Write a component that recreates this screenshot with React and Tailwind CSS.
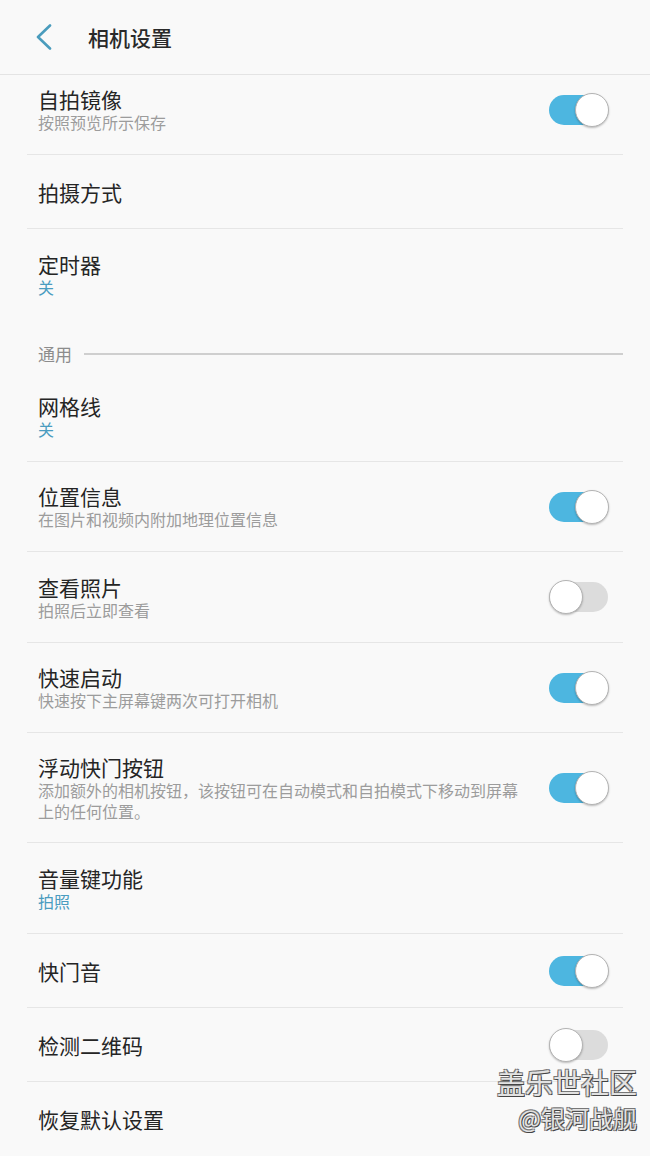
import { useState } from 'react';

const rowsTop = [
  { id: 'mirror', title: '自拍镜像', sub: '按照预览所示保存', toggle: true, on: true, h: 'h-[80px] pb-[10px]' },
  { id: 'mode', title: '拍摄方式', h: 'h-[74px]' },
  { id: 'timer', title: '定时器', value: '关', h: 'h-[90px]', noBorder: true },
];

const rowsGeneral = [
  { id: 'grid', title: '网格线', value: '关', h: 'h-[90px]' },
  { id: 'location', title: '位置信息', sub: '在图片和视频内附加地理位置信息', toggle: true, on: true, h: 'h-[90px]' },
  { id: 'review', title: '查看照片', sub: '拍照后立即查看', toggle: true, on: false, h: 'h-[91px]' },
  { id: 'quick', title: '快速启动', sub: '快速按下主屏幕键两次可打开相机', toggle: true, on: true, h: 'h-[90px]' },
  {
    id: 'float',
    title: '浮动快门按钮',
    sub: '添加额外的相机按钮，该按钮可在自动模式和自拍模式下移动到屏幕上的任何位置。',
    toggle: true,
    on: true,
    h: 'h-[110px]',
  },
  { id: 'volume', title: '音量键功能', value: '拍照', h: 'h-[91px]' },
  { id: 'sound', title: '快门音', toggle: true, on: true, h: 'h-[74px]' },
  { id: 'qr', title: '检测二维码', toggle: true, on: false, h: 'h-[74px]' },
  { id: 'reset', title: '恢复默认设置', h: 'h-[74px]', noBorder: true },
];

const Toggle = ({ on, onClick }) => (
  <button
    onClick={onClick}
    className={`relative w-[59px] h-[30px] rounded-full shrink-0 ${on ? 'bg-[#4db6e0]' : 'bg-[#dcdcdc]'}`}
  >
    <span
      className={`absolute top-[-2px] w-[34px] h-[34px] rounded-full bg-white border border-[#b4b4b4] shadow-[0_1px_2px_rgba(0,0,0,0.25)] ${
        on ? 'right-[-1px]' : 'left-0'
      }`}
    ></span>
  </button>
);

const Row = ({ row, on, onToggle }) => (
  <div
    className={`${row.h} flex items-center justify-between pl-[11px] pr-[15px] ${
      row.noBorder ? '' : 'border-b border-[#e6e6e6]'
    }`}
  >
    <div className="flex flex-col pr-[20px]">
      <span className="text-[21px] leading-[26px] text-[#252525]">{row.title}</span>
      {row.sub && (
        <span className="text-[16px] leading-[21px] text-[#9c9c9c] max-w-[490px]">{row.sub}</span>
      )}
      {row.value && <span className="text-[16px] leading-[21px] text-[#4a9cc0]">{row.value}</span>}
    </div>
    {row.toggle && <Toggle on={on} onClick={onToggle} />}
  </div>
);

const App = () => {
  const [state, setState] = useState(() => {
    const s = {};
    [...rowsTop, ...rowsGeneral].forEach(r => {
      if (r.toggle) s[r.id] = r.on;
    });
    return s;
  });

  const flip = id => setState({ ...state, [id]: !state[id] });

  return (
    <div className="relative w-full h-[1156px] overflow-hidden bg-[#f9f9f9] font-['Noto_Sans_CJK_SC','Noto_Sans',sans-serif]">
      {/* Header */}
      <div className="h-[75px] flex items-center border-b border-[#e4e4e4]">
        <div className="pl-[35px] w-[88px]">
          <svg width="18" height="26" viewBox="0 0 18 26" fill="none">
            <path d="M15 1.5 L3 13 L15 24.5" stroke="#4a9cbd" strokeWidth="2.6" strokeLinecap="round" strokeLinejoin="round" />
          </svg>
        </div>
        <h1 className="text-[21px] font-medium text-[#2a2a2a] leading-none">相机设置</h1>
      </div>

      <div className="mx-[27px]">
        {rowsTop.map(row => (
          <Row key={row.id} row={row} on={state[row.id]} onToggle={() => flip(row.id)} />
        ))}

        {/* Section header */}
        <div className="h-[53px] flex items-end pb-[7px] pl-[11px]">
          <span className="text-[17px] leading-[23px] text-[#8c8c8c]">通用</span>
          <div className="flex-1 h-[2px] bg-[#cfcfcf] ml-[12px] mb-[10px]"></div>
        </div>

        {rowsGeneral.map(row => (
          <Row key={row.id} row={row} on={state[row.id]} onToggle={() => flip(row.id)} />
        ))}
      </div>

      {/* Watermark */}
      <div className="absolute right-[13px] top-[1064px] flex flex-col items-end pointer-events-none">
        <span className="text-[28px] leading-[36px] text-[#e2e2e2] [text-shadow:1px_1px_0_#444,-1px_-1px_0_#777,1px_-1px_0_#777,-1px_1px_0_#777]">
          盖乐世社区
        </span>
        <span className="text-[24px] leading-[32px] text-[#e2e2e2] mt-[2px] [text-shadow:1px_1px_0_#444,-1px_-1px_0_#777,1px_-1px_0_#777,-1px_1px_0_#777]">
          @银河战舰
        </span>
      </div>
    </div>
  );
};

export default App;
